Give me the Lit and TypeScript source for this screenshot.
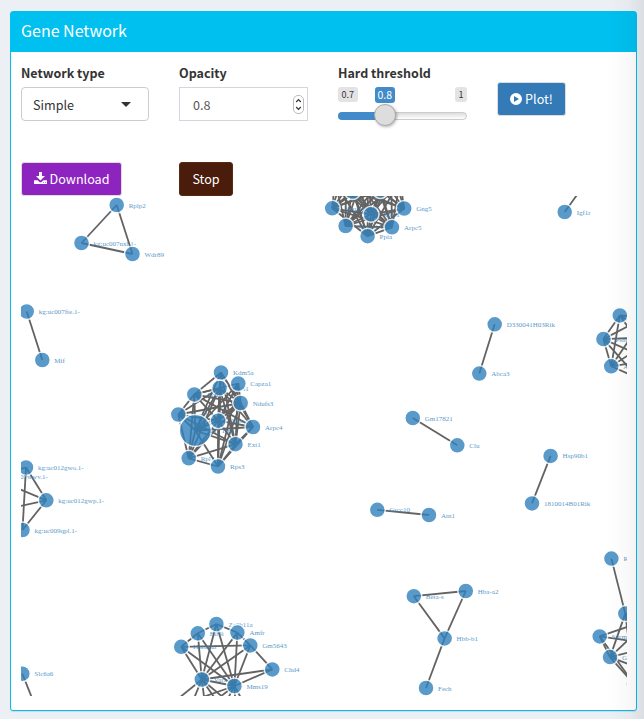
import { LitElement, html, svg, css } from "lit";
import { customElement } from "lit/decorators.js";

type GeneNode = [id: string, x: number, y: number, label?: string, r?: number];

const nodes: GeneNode[] = [
  // top cluster
  ["t9", 335, 181], ["t10", 400, 181], ["t11", 346, 166], ["t12", 391, 167], ["t13", 368, 160],
  ["t1", 332.2, 208.3, "Ndufa4"], ["t2", 345.6, 226, "Atp5a1 Cox"], ["t3", 367.6, 236.2, "Ppia"],
  ["t5", 404.2, 208.5, "Gng5"], ["t4", 392, 227.3, "Arpc5"],
  ["t7", 352.5, 191.5], ["t8", 380.5, 190.5], ["t6", 371, 214.3, "Rpl11"],
  // left pairs
  ["l1", 116.7, 205, "Rplp2"], ["l2", 81.5, 243, "kg:uc007nxl.1-"], ["l3", 132.5, 254, "Wdr89"],
  ["l4", 26.7, 311.5, "kg:uc007fte.1-"], ["l5", 42.3, 360, "Mif"],
  ["l6", 26, 467.5, "kg:uc012gwo.1-"], ["l7", -11, 476.5, "kg:uc007wwv.1-"], ["l8", 46.3, 500.3, "kg:uc012gwp.1-"],
  ["l9", 22.5, 530, "kg:uc009qpl.1-"], ["l10", -20, 515],
  ["l11", 22.3, 673.7, "Slc6a6"], ["l12", 40, 718],
  // middle cluster
  ["m1", 221, 372.5, "Kdm5a"], ["m2", 219.6, 388, "Rpl31"], ["m3", 238.3, 383.5, "Capza1"],
  ["m4", 194.3, 394.4, "Actr2"], ["m5", 240.7, 403, "Ndufs3"], ["m6", 178.3, 414.5, "Rps11"],
  ["m7", 218.2, 420.7, "Arpc2"], ["m9", 253, 427, "Arpc4"], ["m10", 235.5, 444.2, "Ext1"],
  ["m11", 188.7, 458.3, "Rpl7"], ["m12", 218, 466.5, "Rps3"], ["m8", 195.3, 430.5, "Cfl1 Tma", 16],
  // pairs on the right
  ["r1", 564.7, 212, "Igf1r"], ["r2", 587, 181],
  ["r3", 494.7, 324.3, "D330041H03Rik"], ["r4", 479.3, 373.6, "Abca3"],
  ["r5", 412.8, 418, "Gm17821"], ["r6", 457.3, 445.3, "Clu"],
  ["r7", 550.6, 455.9, "Hsp90b1"], ["r8", 532, 503.4, "1810014B01Rik"],
  ["r9", 377.3, 509.8, "Grcc10"], ["r10", 429, 515, "Atn1"],
  ["h1", 413.8, 596.2, "Beta-s"], ["h2", 465.8, 591, "Hba-a2"], ["h3", 444.6, 638.4, "Hbb-b1"], ["h4", 426, 688, "Fech"],
  // cluster cut by the right edge, upper
  ["u1", 619.8, 315.4], ["u2", 603.4, 339.1, "Psmb1"], ["u3", 611.2, 366.3, "Arpc"],
  ["u4", 644, 318], ["u5", 656, 337], ["u6", 651, 360], ["u7", 638, 378],
  // cluster cut by the right edge, lower
  ["v1", 611.4, 558.6, "Rpl4"], ["v2", 625.3, 613.6], ["v3", 599.7, 636.4, "Snrm2"],
  ["v4", 610, 657.1, "Gm10"], ["v5", 650, 619], ["v6", 658, 645], ["v7", 650, 672], ["v8", 634, 684],
  // bottom cluster
  ["b1", 216.4, 624, "Zc3h11a"], ["b2", 197.8, 633.3, "Eif4i"], ["b3", 237.4, 632.6, "Amfr"],
  ["b4", 181.2, 646.8, "Hnrnpul"], ["b5", 250.3, 645.4, "Gm5643"], ["b6", 272.3, 669.4, "Chd4"],
  ["b7", 201.8, 679.5, "Varx"], ["b8", 234.4, 686, "Mms19"],
  ["b9", 163, 711], ["b10", 183, 725], ["b11", 209, 735], ["b12", 237, 730], ["b13", 256, 725],
];

const at = new Map(nodes.map((n) => [n[0], n]));

const clique = (prefix: string, ids: number[], skip: string[] = []): [string, string][] =>
  ids.flatMap((a, i) =>
    ids.slice(i + 1)
      .filter((b) => !skip.includes(`${a}-${b}`))
      .map((b): [string, string] => [prefix + a, prefix + b]));

const pairs = (text: string): [string, string][] =>
  text.trim().split(/\s+/).map((p) => p.split("-") as [string, string]);

const links: [string, string][] = [
  ...clique("t", [1, 2, 3, 4, 5, 6, 7, 8, 9, 10, 11, 12, 13], ["1-2", "2-3", "4-5", "1-5"]),
  ...clique("m", [1, 2, 3, 4, 5, 6, 7, 8, 9, 10, 11, 12],
    ["1-3", "1-6", "3-6", "3-11", "6-9", "6-12", "9-11", "1-11", "3-9", "4-12", "2-3", "4-10"]),
  ...clique("u", [1, 2, 3, 4, 5, 6, 7], ["1-7"]),
  ...clique("v", [2, 3, 4, 5, 6, 7, 8], ["2-3", "3-7"]),
  ...pairs(`
    l1-l2 l1-l3 l2-l3 l4-l5 l6-l7 l6-l8 l6-l9 l8-l9 l7-l8 l8-l10 l11-l12
    r1-r2 r3-r4 r5-r6 r7-r8 r9-r10 h1-h2 h1-h3 h2-h3 h3-h4 v1-v2
    b1-b2 b1-b3 b2-b4 b3-b5 b4-b5 b5-b6
    b1-b7 b2-b7 b3-b7 b4-b7 b5-b7 b6-b7 b1-b8 b2-b8 b3-b8 b4-b8 b5-b8 b6-b8 b7-b8
    b7-b9 b7-b10 b7-b11 b7-b12 b7-b13 b8-b9 b8-b10 b8-b11 b8-b12 b8-b13`),
];

@customElement("gene-graph")
class GeneGraph extends LitElement {
  static styles = css`
    :host { display: block; height: 500px; }
    svg { display: block; width: 100%; height: 100%; }
    .link { stroke: #636363; stroke-width: 1.8; }
    .node { opacity: 0.8; fill: #3182bd; }
    .dot { stroke: #fff; stroke-width: 1.5; }
    .name { font: 7px "Liberation Serif", serif; }
  `;
  render() {
    return html`<svg viewBox="21 196 606 500" preserveAspectRatio="xMinYMin slice">
      ${links.map(([a, b]) => {
        const p = at.get(a)!, q = at.get(b)!;
        return svg`<line class="link" x1=${p[1]} y1=${p[2]} x2=${q[1]} y2=${q[2]}></line>`;
      })}
      ${nodes.map(([, x, y, label, r]) => svg`<g class="node" transform="translate(${x} ${y})">
        <circle class="dot" r=${r ?? 8}></circle>
        ${label ? svg`<text class="name" x="12" y="2.5">${label}</text>` : null}
      </g>`)}
    </svg>`;
  }
}

@customElement("app-root")
class AppRoot extends LitElement {
  static styles = css`
    :host {
      display: block; position: relative; box-sizing: border-box; width: 644px; height: 719px;
      padding: 11px 7px 8px 10px; background: #ecf0f5; overflow: hidden; color: #333;
      font-family: "Noto Sans CJK SC", "Open Sans", sans-serif; font-size: 12.6px;
    }
    * { box-sizing: border-box; }
    .shade {
      position: absolute; inset: 0 0 0 auto; width: 36px; pointer-events: none;
      background: linear-gradient(to right, rgba(0,0,0,0), rgba(0,0,0,.028) 60%, rgba(0,0,0,.075));
    }
    .box { height: 700px; border: 1px solid #00c0ef; border-radius: 3px; background: #fff; box-shadow: 0 1px 1px rgba(0,0,0,.1); }
    .head { height: 40px; padding-left: 10px; background: #00c0ef; color: #fff; font-size: 16px; line-height: 37px; }
    .body { padding: 0 9px 0 10px; }
    .controls { display: grid; grid-template-columns: 158px 159px 159px 1fr; height: 110px; padding-top: 12px; }
    .label { display: block; height: 23px; font-size: 12.5px; font-weight: 700; line-height: 17px; }
    .select, .number { display: flex; align-items: center; height: 34px; }
    .select { width: 128px; padding: 0 17px 0 11px; border: 1px solid #ccc; border-radius: 4px; justify-content: space-between; }
    .caret { border: 5px solid transparent; border-top-color: #333; border-bottom: 0; }
    .number { width: 129px; padding: 0 3px 0 13px; border: 1px solid #d2d6de; justify-content: space-between; color: #555; }
    .spin { width: 11px; height: 19px; }
    .range { width: 129px; }
    .tags { display: flex; height: 16px; font-size: 9px; }
    .tag { height: 15px; padding: 0 3.5px; border-radius: 3px; background: #e3e3e3; line-height: 15px; }
    .now { height: 16px; margin-left: 17px; margin-right: auto; background: #428bca; color: #fff; font-size: 10.5px; line-height: 16px; padding: 0 3px; }
    .track { position: relative; height: 8px; margin-top: 9px; border: 1px solid #ccc; border-radius: 5px; background: linear-gradient(#ddd, #fff); }
    .fill { position: absolute; inset: -1px auto -1px -1px; width: 47px; border-radius: 5px 0 0 5px; background: #428bca; }
    .knob { position: absolute; left: 35px; top: -9px; width: 22px; height: 22px; border: 1px solid #aaa; border-radius: 50%; background: #ddd; box-shadow: 1px 1px 3px rgba(0,0,0,.3); }
    .btn { display: inline-flex; align-items: center; justify-content: center; height: 34px; padding-bottom: 1px; border-radius: 3px; color: #fff; border: 1px solid #ddd; white-space: nowrap; }
    .btn svg { display: block; flex: none; }
    .plot { width: 69px; margin-top: 18px; gap: 3px; background: #337ab7; }
    .actions { display: grid; grid-template-columns: 158px 1fr; height: 34px; }
    .download { width: 101px; gap: 3px; background: #8e24bf; }
    .stop { width: 54px; background: #4a1c0b; border-color: #5a2a10; }
  `;
  render() {
    return html`
      <div class="box">
        <div class="head">Gene Network</div>
        <div class="body">
          <div class="controls">
            <div><span class="label">Network type</span>
              <div class="select"><span>Simple</span><i class="caret"></i></div></div>
            <div><span class="label">Opacity</span>
              <div class="number"><span>0.8</span>
                <svg class="spin" viewBox="0 0 11 19" fill="none">
                  <rect x=".5" y=".5" width="10" height="18" rx="4.5" stroke="#bbb"></rect>
                  <path d="M3.2 7 5.5 4.7 7.8 7M3.2 12 5.5 14.3 7.8 12" stroke="#333" stroke-width="1.2"></path>
                </svg></div></div>
            <div><span class="label">Hard threshold</span>
              <div class="range">
                <div class="tags"><span class="tag">0.7</span><span class="tag now">0.8</span><span class="tag">1</span></div>
                <div class="track"><div class="fill"></div><div class="knob"></div></div>
              </div></div>
            <div><div class="btn plot">
              <svg width="12" height="12" viewBox="0 0 12 12"><path fill="#fff" fill-rule="evenodd" d="M6 0a6 6 0 1 1 0 12A6 6 0 0 1 6 0ZM4 3v6l5-3Z"></path></svg>
              <span>Plot!</span></div></div>
          </div>
          <div class="actions">
            <div><div class="btn download">
              <svg width="13" height="13" viewBox="0 0 13 13" fill="#fff"><path d="M5 0h3v4h3L6.500 8.500 2 4h3ZM0 8.300h3.700l1.500 1.500q1.300 1 2.600 0l1.500-1.500H13V12H0ZM9 10v.8h.8V10ZM11 10v.8h.8V10Z" fill-rule="evenodd"></path></svg>
              <span>Download</span></div></div>
            <div><div class="btn stop">Stop</div></div>
          </div>
          <gene-graph></gene-graph>
        </div>
      </div>
      <div class="shade"></div>`;
  }
}
